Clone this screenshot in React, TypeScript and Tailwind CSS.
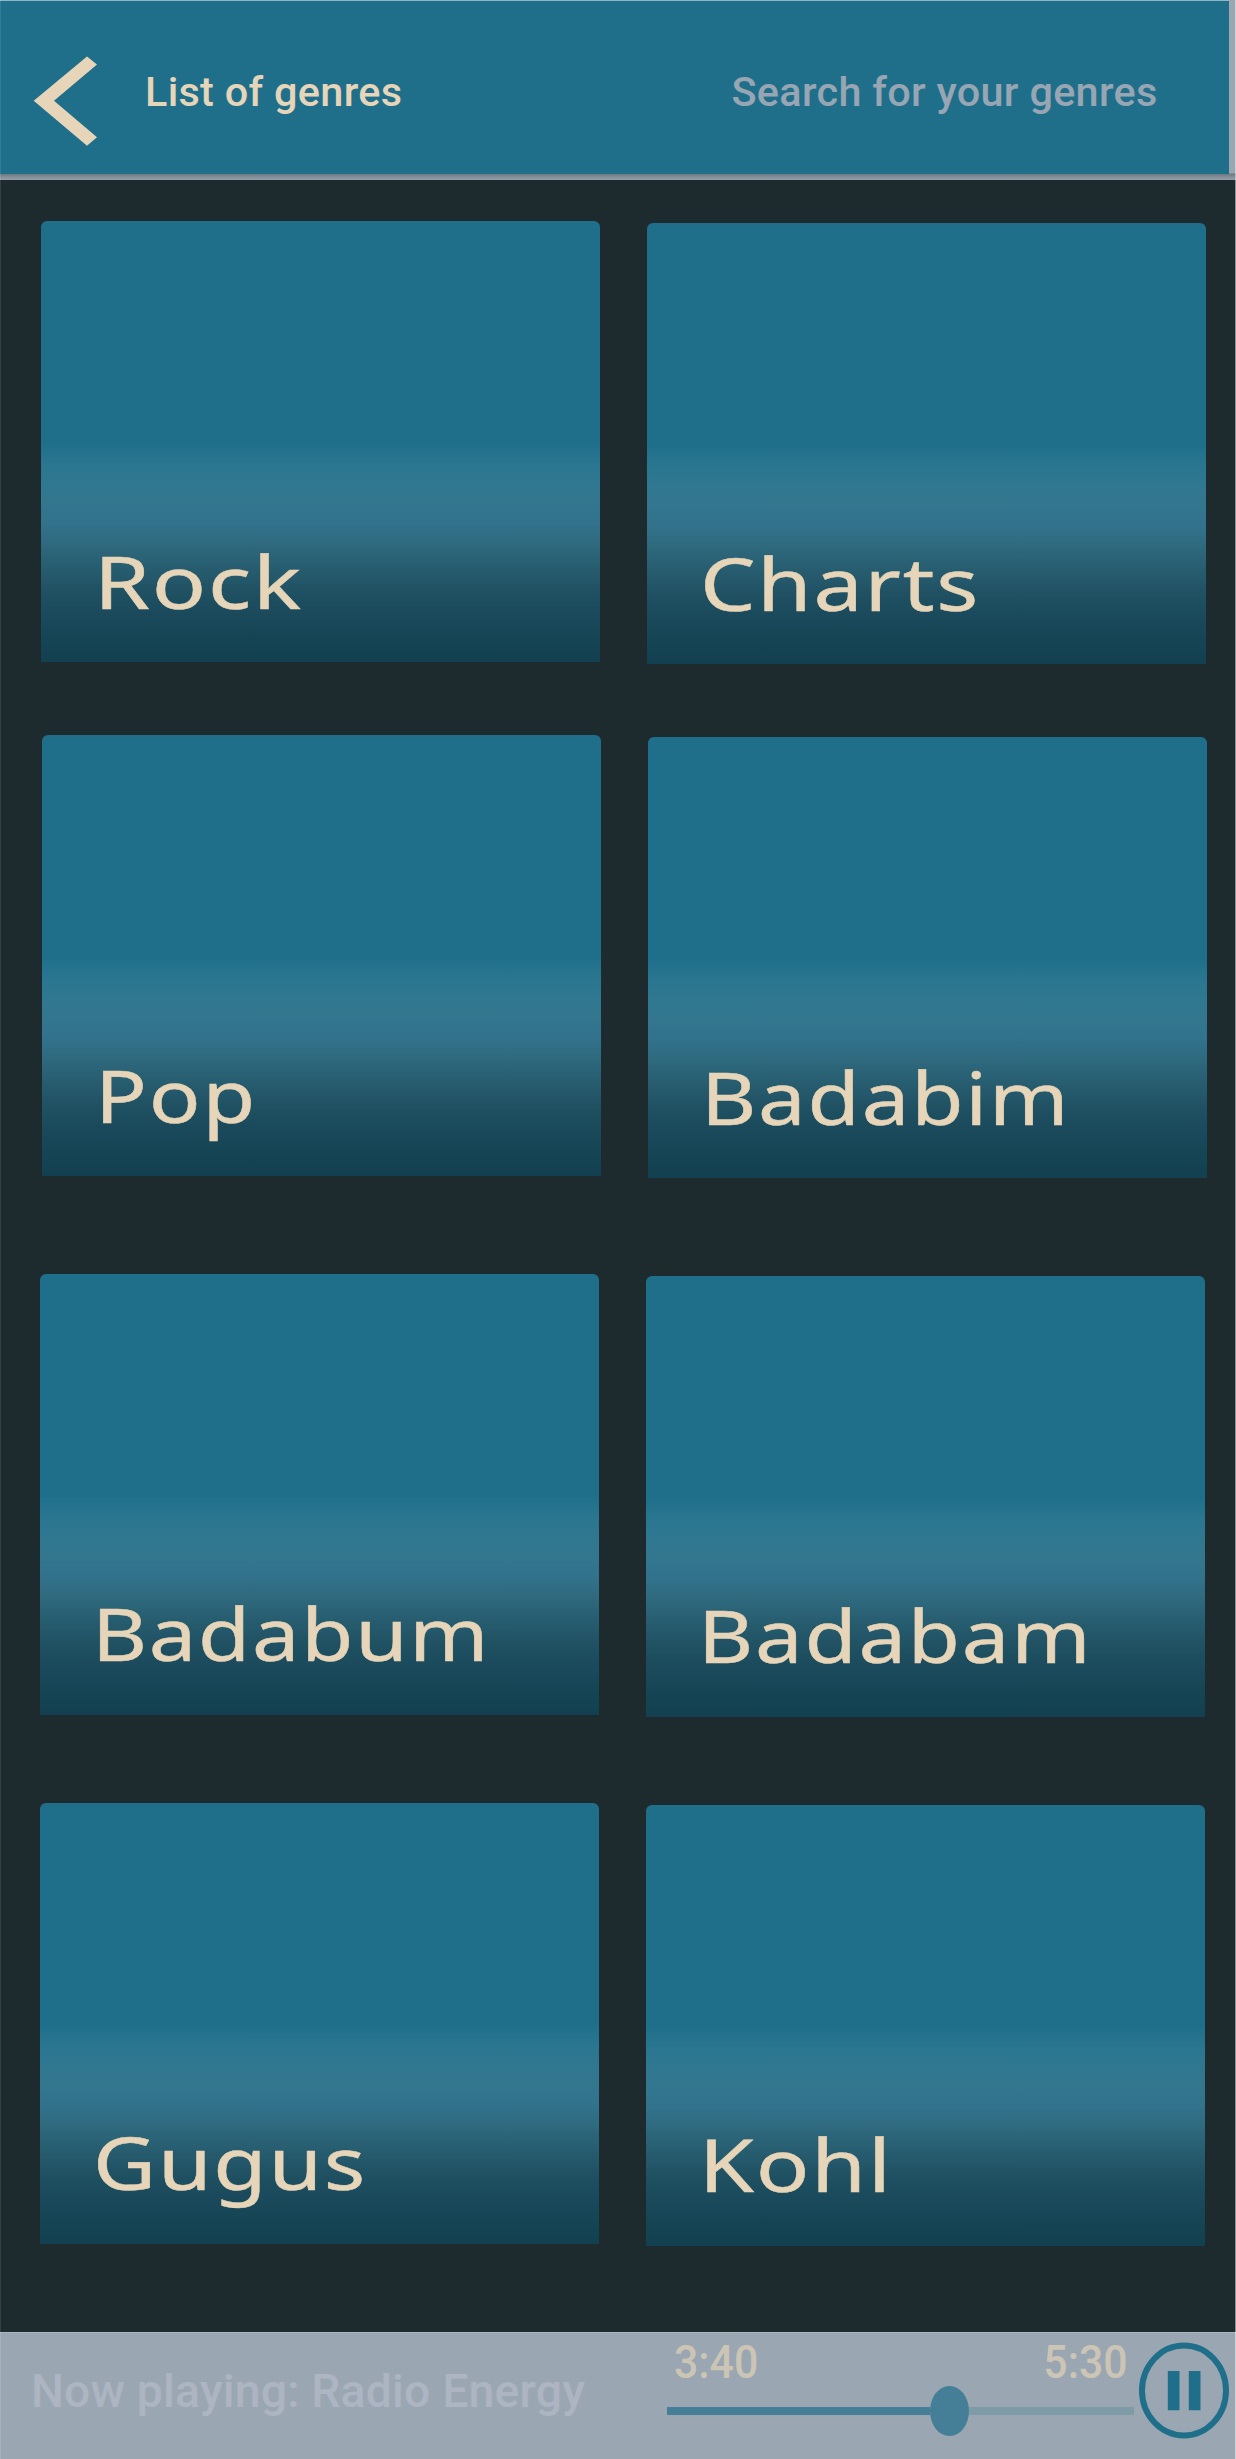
import React from 'react';

type Genre = { name: string; stretch: string };

const ROWS: { className: string; genres: [Genre, Genre] }[] = [
  {
    className: 'ml-[41px] mt-[41px]',
    genres: [
      { name: 'Rock', stretch: 'scale-x-[1.232]' },
      { name: 'Charts', stretch: 'scale-x-[1.204]' },
    ],
  },
  {
    className: 'ml-[42px] mt-[71px]',
    genres: [
      { name: 'Pop', stretch: 'scale-x-[1.176]' },
      { name: 'Badabim', stretch: 'scale-x-[1.166]' },
    ],
  },
  {
    className: 'ml-[39.5px] mt-[95.5px]',
    genres: [
      { name: 'Badabum', stretch: 'scale-x-[1.161]' },
      { name: 'Badabam', stretch: 'scale-x-[1.164]' },
    ],
  },
  {
    className: 'ml-[40px] mt-[86px]',
    genres: [
      { name: 'Gugus', stretch: 'scale-x-[1.188]' },
      { name: 'Kohl', stretch: 'scale-x-[1.216]' },
    ],
  },
];

function GenreCard({ genre, className }: { genre: Genre; className: string }) {
  return (
    <button
      className={`flex h-[441px] w-[559px] shrink-0 items-end rounded-t-[6px] bg-[linear-gradient(to_bottom,#1f6f8b_0px,#1f6f8b_222px,#29758f_240px,#2f7791_258px,#33778f_278px,#32728c_302px,#2f6a7f_322px,#296073_340px,#215365_366px,#1a4a5b_392px,#154455_419px,#124051_441px)] pb-[41.5px] pl-[52.7px] ${className}`}
    >
      <span
        className={`origin-left font-['Noto_Sans',sans-serif] text-[73px] leading-[80px] tracking-[1.5px] text-[#e6d5b8] [-webkit-text-stroke:0.5px_#e6d5b8] ${genre.stretch}`}
      >
        {genre.name}
      </span>
    </button>
  );
}

function Header() {
  return (
    <header className="h-[180px] bg-[linear-gradient(to_bottom,#9aa6b2_0px,#9aa6b2_173px,#6f7680_174px,#7f8792_176px,#94a0ac_180px)] pr-[7px]">
      <div className="flex h-[174px] items-start border-t border-[#8fb7c5] bg-[#1f6f8b]">
        <svg className="ml-[33px] mt-[55px] h-[91px] w-[65px] shrink-0" viewBox="33 56 65 91" fill="#e6d5b8">
          <path d="M33.7 100.7 87 56.4 97 64.6 54 100.7 97 137.2 87 145.8Z" />
        </svg>
        <h1 className="ml-[47px] mt-[67px] w-[586.5px] text-[41.4px] leading-[48px] font-medium tracking-[0.3px] text-[#e6d5b8]">
          List of genres
        </h1>
        <span className="mt-[67px] whitespace-nowrap text-[41.4px] leading-[48px] font-medium tracking-[0.3px] text-[#98a5b3]">
          Search for your genres
        </span>
      </div>
    </header>
  );
}

function Player() {
  return (
    <footer className="flex h-[127px] items-start border-t border-[#a9b9be] bg-[#9aa7b2]">
      <p className="mt-[31px] w-[667px] shrink-0 whitespace-nowrap pl-[31px] text-[46.4px] leading-[54px] font-medium tracking-[0.16px] text-[#adb4c2]">
        Now playing: Radio Energy
      </p>
      <div className="w-[466.5px] shrink-0">
        <div className="mt-[5px] flex justify-between pl-[6.5px] pr-[6px] text-[46px] leading-[48px] font-medium text-[#ccc5b5]">
          <span className="origin-left scale-x-[0.93]">3:40</span>
          <span className="origin-right scale-x-[0.93]">5:30</span>
        </div>
        <div className="flex h-[50px] items-center">
          <div className="h-[8.5px] w-[263px] bg-[#457f97]" />
          <div className="h-[50px] w-[38.5px] rounded-[50%] bg-[#457f97]" />
          <div className="h-[8.5px] flex-1 bg-[#7f9ba8]" />
        </div>
      </div>
      <button className="ml-[5.5px] mt-[9px] shrink-0" aria-label="Pause">
        <svg className="h-[97px] w-[90px]" viewBox="0 0 90 97">
          <ellipse cx="45" cy="48.5" rx="42" ry="45" fill="none" stroke="#1f6f8b" strokeWidth="6" />
          <path d="M28.8 29h11.7v39.3H28.8zM49.8 29h11.7v39.3H49.8z" fill="#1f6f8b" />
        </svg>
      </button>
    </footer>
  );
}

export default function App() {
  return (
    <div className="relative flex h-[2459px] w-[1236px] flex-col overflow-hidden bg-[#1d2b2f] font-['Roboto',sans-serif]">
      <Header />
      <main className="flex flex-1 flex-col">
        {ROWS.map((row) => (
          <section key={row.genres[0].name} className={`flex gap-[47.3px] ${row.className}`}>
            <GenreCard genre={row.genres[0]} className="" />
            <GenreCard genre={row.genres[1]} className="mt-[2px]" />
          </section>
        ))}
      </main>
      <Player />
      <div className="pointer-events-none absolute inset-0 border-r border-l border-r-white/50 border-l-white/10" />
    </div>
  );
}
